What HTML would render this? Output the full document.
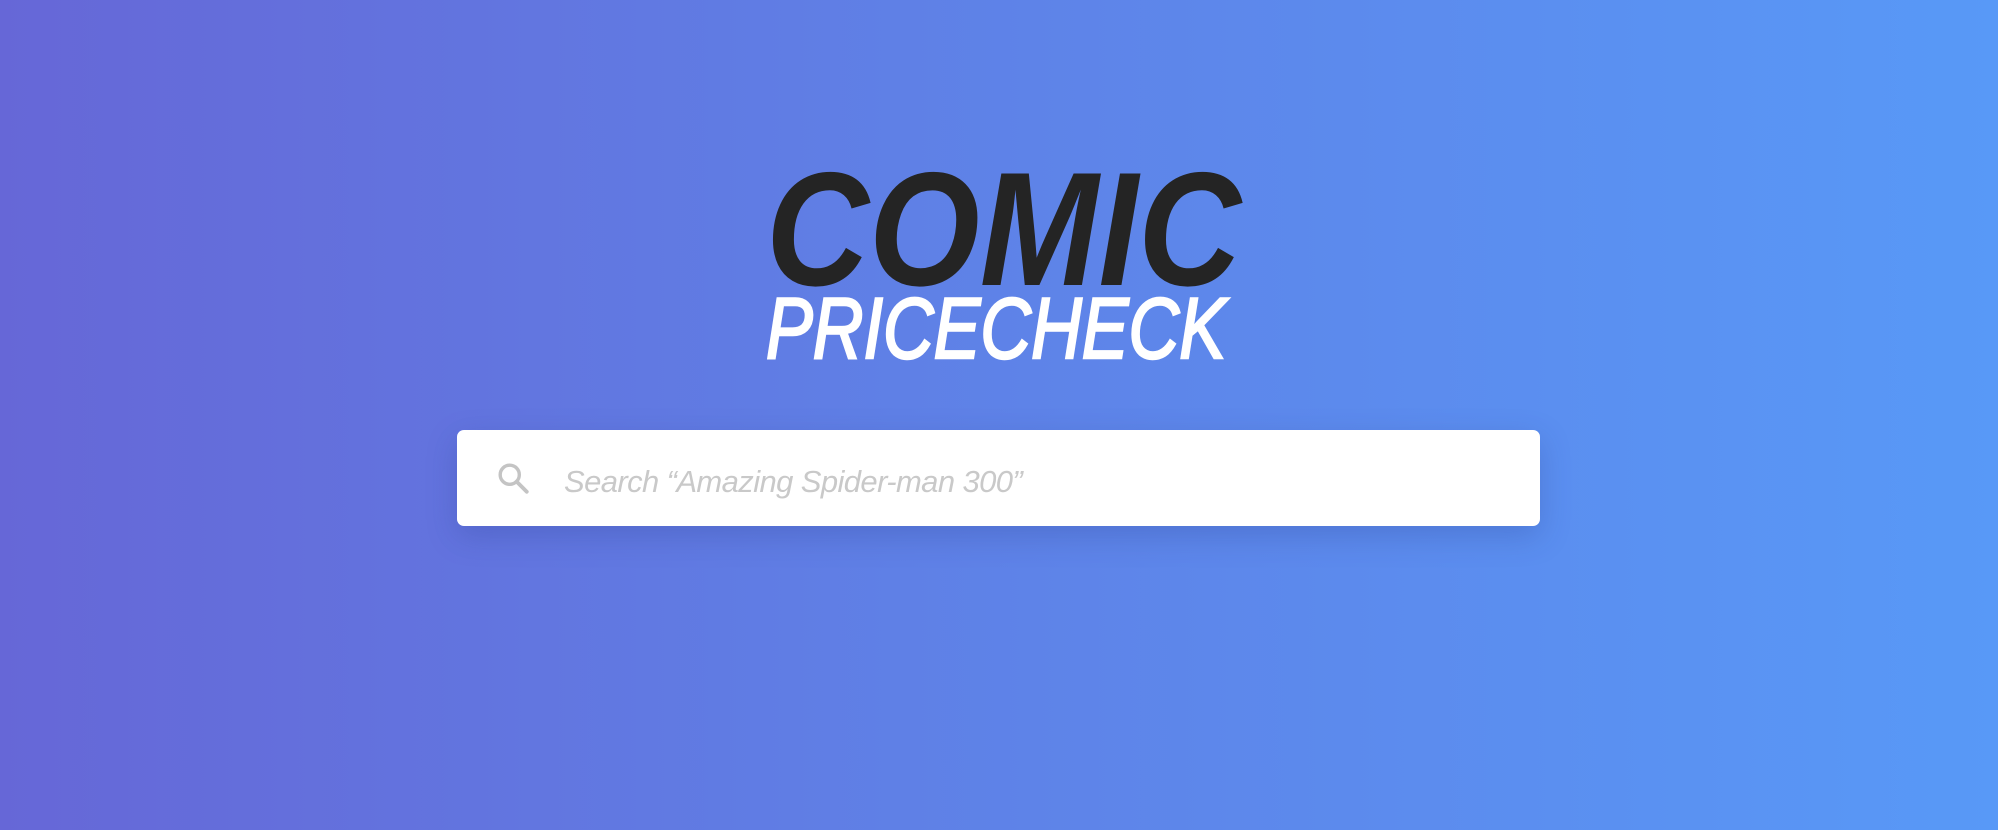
<!DOCTYPE html>
<html><head><meta charset="utf-8"><style>
html,body{margin:0;padding:0;width:1998px;height:830px;overflow:hidden}
body{background:linear-gradient(90deg,#6667d7 0%,#5f80e6 45%,#5899f7 100%);position:relative;font-family:"Liberation Sans",sans-serif}
.box{position:absolute;left:457px;top:430px;width:1083px;height:96px;background:#fff;border-radius:7px;box-shadow:0 10px 30px rgba(40,60,140,.25)}
.ph{position:absolute;left:107px;top:34px;font-size:31px;font-style:italic;color:#c9c9c9;letter-spacing:-0.6px;white-space:nowrap}
</style></head><body>
<svg width="1998" height="830" style="position:absolute;left:0;top:0">
<text x="766" y="285" font-family="Liberation Sans" font-weight="bold" font-style="italic" font-size="162" fill="#242424" textLength="475" lengthAdjust="spacingAndGlyphs">COMIC</text>
<text x="766" y="358" font-family="Liberation Sans" font-style="italic" font-size="86" fill="#fff" stroke="#fff" stroke-width="2.5" textLength="460" lengthAdjust="spacingAndGlyphs">PRICECHECK</text>
</svg>
<div class="box">
<svg style="position:absolute;left:40px;top:32px" width="34" height="34" viewBox="0 0 32 32"><circle cx="12" cy="12" r="9" fill="none" stroke="#c4c4c4" stroke-width="3.2"/><path d="M18.5 18.5L28 28" stroke="#c4c4c4" stroke-width="3.6" stroke-linecap="round"/></svg>
<div class="ph">Search “Amazing Spider-man 300”</div>
</div>
</body></html>
